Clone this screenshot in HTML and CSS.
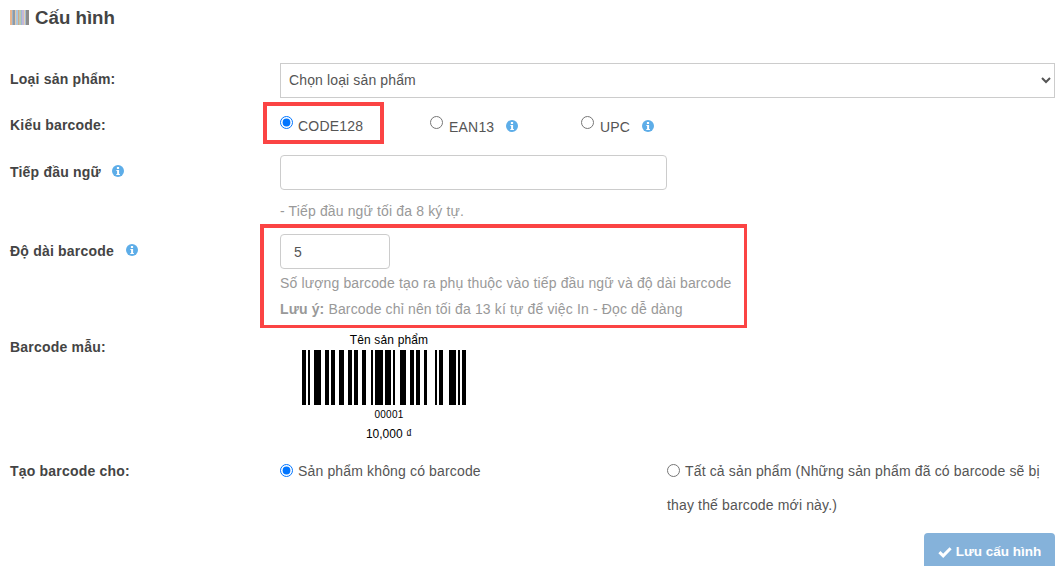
FILE: index.html
```html
<!DOCTYPE html>
<html lang="vi">
<head>
<meta charset="utf-8">
<title>Cấu hình</title>
<link rel="stylesheet" href="styles.css">
</head>
<body>
<svg width="0" height="0" class="defs" aria-hidden="true">
  <symbol id="info" viewBox="0 0 12 12">
    <circle cx="6" cy="6" r="6" fill="#5dade8"/>
    <rect x="4.9" y="2" width="2.2" height="2" fill="#fff"/>
    <path d="M4.4 5h2.7v3.9h.8V10H4.3V8.9h.8V6.1h-.7z" fill="#fff"/>
  </symbol>
</svg>
<main class="page">
  <h1 class="title">
    <svg class="title-icon" viewBox="0 0 19 15" width="19" height="15">
      <rect x="0" width="2" height="15" fill="#e8b58e"/>
      <rect x="2" width="1" height="15" fill="#9fb4c8"/>
      <rect x="3" width="2" height="15" fill="#8f9aa6"/>
      <rect x="5" width="1" height="15" fill="#e6c9a8"/>
      <rect x="6" width="2" height="15" fill="#a9c6e0"/>
      <rect x="8" width="1" height="15" fill="#cfa98c"/>
      <rect x="9" width="2" height="15" fill="#b8c9b0"/>
      <rect x="11" width="1" height="15" fill="#9db8d8"/>
      <rect x="12" width="2" height="15" fill="#c4b6d6"/>
      <rect x="14" width="1" height="15" fill="#e3d3b0"/>
      <rect x="15" width="1" height="15" fill="#a5bfd8"/>
      <rect x="16" width="3" height="15" fill="#8b8b8b"/>
    </svg>
    Cấu hình
  </h1>

  <div class="row row-type">
    <label class="label">Loại sản phẩm:</label>
    <select class="select"><option>Chọn loại sản phẩm</option></select>
  </div>

  <div class="row row-kind">
    <label class="label">Kiểu barcode:</label>
    <div class="radios">
      <label class="radio"><input type="radio" name="kind" checked>CODE128</label>
      <label class="radio radio-low"><input type="radio" name="kind">EAN13<svg class="info info-after"><use href="#info"/></svg></label>
      <label class="radio radio-low"><input type="radio" name="kind">UPC<svg class="info info-after"><use href="#info"/></svg></label>
    </div>
  </div>

  <div class="row row-prefix">
    <label class="label">Tiếp đầu ngữ<svg class="info info-label"><use href="#info"/></svg></label>
    <div>
      <input class="input input-wide" type="text">
      <p class="help help-prefix">- Tiếp đầu ngữ tối đa 8 ký tự.</p>
    </div>
  </div>

  <div class="row row-length">
    <label class="label">Độ dài barcode<svg class="info info-label-wide"><use href="#info"/></svg></label>
    <div>
      <input class="input input-short" type="text" value="5">
      <p class="help help-count">Số lượng barcode tạo ra phụ thuộc vào tiếp đầu ngữ và độ dài barcode</p>
      <p class="help help-note"><b>Lưu ý:</b> Barcode chỉ nên tối đa 13 kí tự để việc In - Đọc dễ dàng</p>
    </div>
  </div>

  <div class="row row-sample">
    <label class="label">Barcode mẫu:</label>
    <div class="sample">
      <div class="sample-name">Tên sản phẩm</div>
      <svg class="bars" viewBox="0 0 79 55" preserveAspectRatio="none" width="164" height="55" shape-rendering="crispEdges">
        <path d="M0 0h2v55H0zM3 0h1v55H3zM6 0h3v55H6zM11 0h2v55h-2zM14 0h2v55h-2zM18 0h2v55h-2zM22 0h2v55h-2zM25 0h2v55h-2zM29 0h2v55h-2zM33 0h1v55h-1zM35 0h4v55h-4zM40 0h3v55h-3zM44 0h1v55h-1zM47 0h3v55h-3zM52 0h2v55h-2zM55 0h2v55h-2zM59 0h1v55h-1zM64 0h1v55h-1zM66 0h2v55h-2zM71 0h3v55h-3zM75 0h1v55h-1zM77 0h2v55h-2z" fill="#000"/>
      </svg>
      <div class="sample-code">00001</div>
      <div class="sample-price">10,000 ₫</div>
    </div>
  </div>

  <div class="row row-for">
    <label class="label">Tạo barcode cho:</label>
    <div class="for-options">
      <label class="radio-long"><input type="radio" name="for" checked>Sản phẩm không có barcode</label>
      <label class="radio-long"><input type="radio" name="for">Tất cả sản phẩm (Những sản phẩm đã có barcode sẽ bị thay thế barcode mới này.)</label>
    </div>
  </div>

  <div class="actions">
    <button class="save" type="button">
      <svg class="check" viewBox="0 0 14 12" width="14" height="12"><path d="M1.4 6.2l3.8 3.6 7.4-7.6" fill="none" stroke="#fff" stroke-width="3"/></svg>Lưu cấu hình
    </button>
  </div>
</main>
<div class="mark mark-kind"></div>
<div class="mark mark-length"></div>
</body>
</html>
```
FILE: styles.css
```css
html, body { margin: 0; height: 566px; overflow: hidden; background: #fff; }
body { font-family: "Liberation Sans", Arial, sans-serif; font-size: 14px; color: #555; position: relative; }
.defs { position: absolute; }
.page { padding: 0 1px 0 10px; }
.title { margin: 0; padding-top: 7px; height: 63px; box-sizing: border-box; display: flex; align-items: flex-start; font-size: 18.7px; line-height: 22px; font-weight: bold; color: #444; }
.title-icon { margin: 3px 6px 0 0; flex: none; }
.row { display: grid; grid-template-columns: 270px 1fr; }
.label { font-weight: bold; color: #444; letter-spacing: .2px; line-height: 20px; display: block; }
.row-type { height: 35px; }
.row-type .label { padding-top: 6px; }
.select { width: 775px; height: 35px; border: 1px solid #ccc; border-radius: 0; background: #fff; color: #555; font: 14px "Liberation Sans", Arial, sans-serif; padding: 0 4px 2px; letter-spacing: .13px; }
.row-kind { height: 57px; }
.row-kind .label { padding-top: 17px; }
.radios { display: grid; grid-template-columns: 150px 151px 1fr; padding-top: 18px; }
.radio { display: flex; align-items: flex-start; line-height: 20px; color: #555; letter-spacing: .2px; }
.radio input, .radio-long input { margin: 0 5px 0 0; width: 13px; height: 13px; flex: none; }
.radio-low { line-height: 22px; }
.radio-low input { margin-right: 6px; }
.info { width: 12px; height: 12px; }
.info-after { margin: 4px 0 0 12px; }
.info-label { margin: 0 0 1px 11px; vertical-align: -1px; }
.info-label-wide { margin: 0 0 1px 12px; vertical-align: -1px; }
.row-prefix { height: 79px; }
.row-prefix .label { padding-top: 7px; }
.input { display: block; height: 35px; box-sizing: border-box; border: 1px solid #ccc; border-radius: 4px; background: #fff; color: #555; font: 14px "Liberation Sans", Arial, sans-serif; padding: 0 13px; outline: none; }
.input-wide { width: 387px; }
.input-short { width: 110px; }
.help { margin: 0; color: #999; line-height: 20px; letter-spacing: .14px; }
.help-prefix { margin-top: 11px; }
.help-count { margin-top: 4px; }
.help-note { margin-top: 6px; }
.help-note b { color: #999; }
.row-length { height: 99px; }
.row-length .label { padding-top: 7px; }
.row-sample { height: 125px; }
.row-sample .label { padding-top: 4px; }
.sample { width: 218px; text-align: center; color: #000; }
.sample-name { font-size: 12px; line-height: 14px; height: 17px; letter-spacing: .15px; }
.bars { display: block; margin-left: 22px; }
.sample-code { font-size: 10px; line-height: 12px; margin-top: 4px; letter-spacing: .2px; }
.sample-price { font-size: 12px; line-height: 14px; margin-top: 6px; }
.row-for { height: 75px; }
.row-for .label { padding-top: 3px; }
.for-options { display: grid; grid-template-columns: 387px 1fr; color: #555; line-height: 34px; letter-spacing: .15px; margin-top: -4px; }
.radio-long input { vertical-align: -1px; }
.actions { display: flex; justify-content: flex-end; }
.save { width: 131px; height: 40px; border: 0; border-radius: 4px; background: #85b2da; color: #fff; font: bold 13.5px "Liberation Sans", Arial, sans-serif; padding: 0 0 4px; }
.check { margin-right: 4px; vertical-align: -2px; }
.mark { position: absolute; border: 4px solid #fb4444; box-sizing: border-box; }
.mark-kind { left: 263px; top: 102px; width: 121px; height: 42px; }
.mark-length { left: 260px; top: 224px; width: 487px; height: 104px; border-width: 4px 3px 3px 4px; }
```
